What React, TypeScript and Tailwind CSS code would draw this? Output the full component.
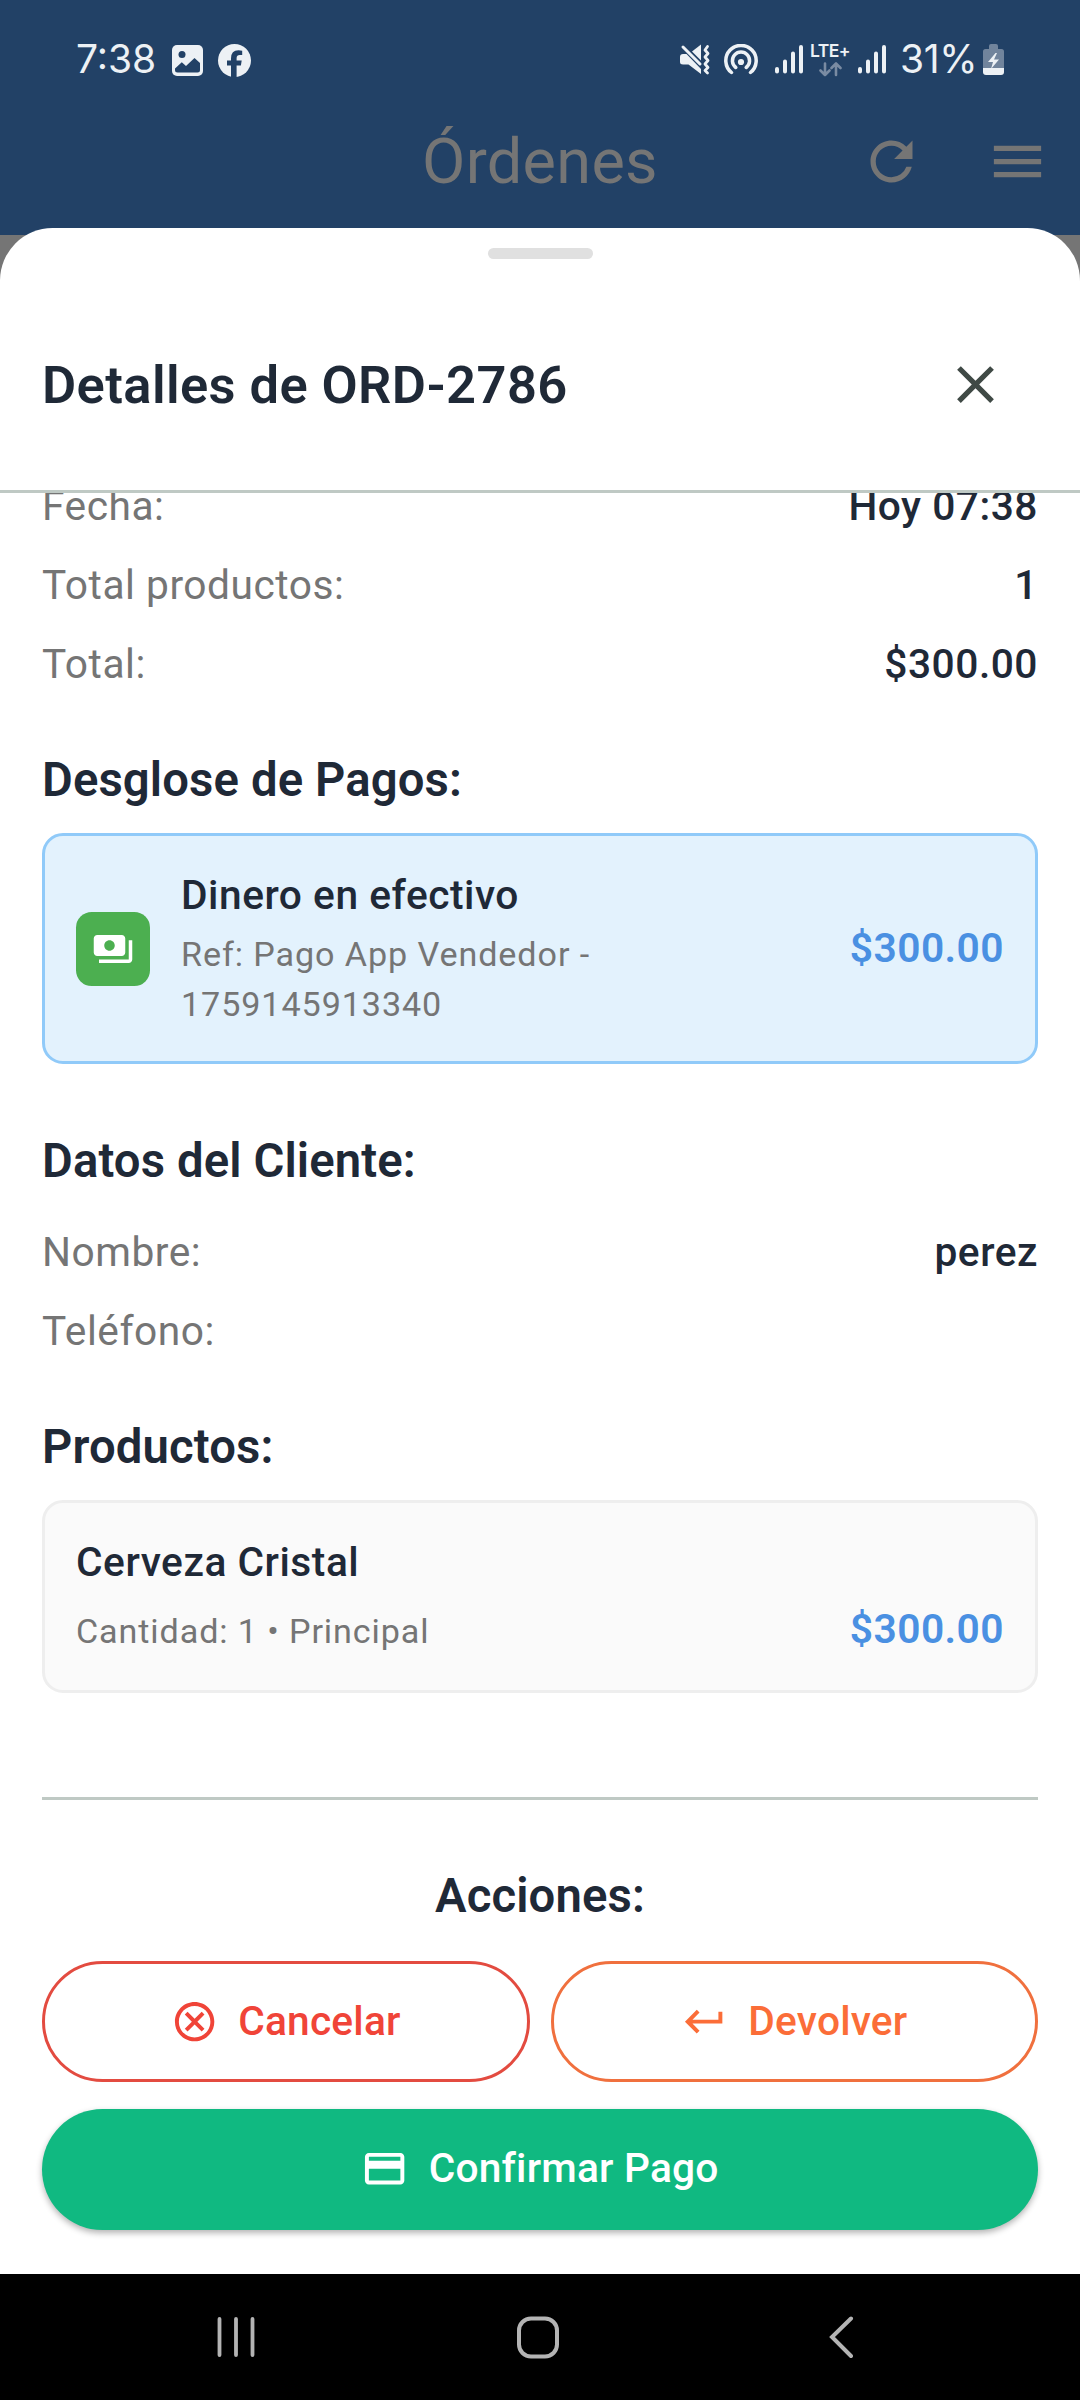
import type { ReactNode } from "react";
import {
  MdClose,
  MdKeyboardReturn,
  MdMenu,
  MdOutlineCancel,
  MdPayments,
  MdRefresh,
} from "react-icons/md";

function SignalBars() {
  return (
    <svg className="h-[30px] w-7 shrink-0" viewBox="0 0 28 30" stroke="#edf1f5" strokeWidth="4" strokeLinecap="round">
      <path d="M2 25v2.500M10 17.500v10M18 9.500v18M26 3v24.500" />
    </svg>
  );
}

function StatusBar() {
  return (
    <div className="flex h-[87px] items-start pt-[44px] pr-[76px] pl-[76px] text-[#edf1f5]">
      <span className="w-[96px] font-[Inter] text-[39px] leading-[30px]">7:38</span>
      <svg className="mt-[1px] h-[31px] w-[31px] shrink-0" viewBox="0 0 31 31">
        <rect width="31" height="31" rx="5" fill="#edf1f5" />
        <circle cx="10" cy="9.500" r="3.500" fill="#224166" />
        <path
          d="M3 23.500L9.800 17.300L14 21L22.500 13L28 18V25Q28 27.500 25.500 27.500H5.500Q3 27.500 3 25Z"
          fill="#224166"
        />
      </svg>
      <svg className="ml-[15px] h-[33px] w-[33px] shrink-0" viewBox="0 0 33 33">
        <circle cx="16.500" cy="16.500" r="16.500" fill="#edf1f5" />
        <path
          d="M13 34V21.500H9V16.500H13V14.500Q13 6.300 20.500 6.300Q22.500 6.300 24.200 6.800V11H21.800Q18.600 11 18.600 14V16.500H23.700L22.900 21.500H18.600V34Z"
          fill="#224166"
        />
      </svg>
      <div className="flex-1" />
      <svg className="h-[31px] w-[30px] shrink-0" viewBox="0 0 30 31" fill="none">
        <path d="M0 13Q0 10 3 10H6.500L21 25V30L8.500 20.500H3Q0 20.500 0 18Z" fill="#edf1f5" />
        <path d="M12 7.500L21 0.500V16.500Z" fill="#edf1f5" />
        <path d="M3 3L20 20" stroke="#edf1f5" strokeWidth="3" strokeLinecap="round" />
        <path
          d="M27.500 2.500L25 6L28 9.500L25 13L28 16.500L25 20L28 23.500L25 26.500L27.500 29"
          stroke="#edf1f5"
          strokeWidth="2.800"
          strokeLinejoin="round"
          strokeLinecap="round"
        />
      </svg>
      <svg
        className="ml-[14px] h-[31px] w-[34px] shrink-0"
        viewBox="0 0 34 31"
        fill="none"
        stroke="#edf1f5"
        strokeWidth="3.500"
        strokeLinecap="round"
      >
        <path d="M7.500 28.500A15.200 15.200 0 1 1 26.500 28.500" />
        <path d="M11.800 23.500A8.600 8.600 0 1 1 22.200 23.500" />
        <circle cx="17" cy="18" r="3.100" fill="#edf1f5" stroke="none" />
      </svg>
      <div className="ml-[17px]">
        <SignalBars />
      </div>
      <div className="ml-[8px] flex w-[38px] flex-col items-center">
        <span className="font-[Inter] text-[17.5px] leading-[13px] font-semibold tracking-[-0.6px]">LTE+</span>
        <svg
          className="mt-[5px] h-[15px] w-[23px]"
          viewBox="0 0 23 15"
          fill="none"
          stroke="#7a8ba2"
          strokeWidth="2.600"
          strokeLinecap="round"
          strokeLinejoin="round"
        >
          <path d="M6 1.500V13M1.500 8.500L6 13L10.500 8.500M17 13V1.500M12.500 6L17 1.500L21.500 6" />
        </svg>
      </div>
      <div className="ml-[9px]">
        <SignalBars />
      </div>
      <span className="ml-[14px] w-[83px] font-[Inter] text-[39px] leading-[30px] tracking-[-0.3px] whitespace-nowrap">
        31%
      </span>
      <svg className="h-[31px] w-[21px] shrink-0" viewBox="0 0 21 31">
        <path d="M6 5V2Q6 0 8 0H13Q15 0 15 2V5H18.500Q21 5 21 7.500V24H0V7.500Q0 5 2.500 5Z" fill="#71849c" />
        <path d="M0 24H21V28Q21 31 18 31H3Q0 31 0 28Z" fill="#edf1f5" />
        <path d="M12.500 9L5 18H10L8 25L16 15.500H11L14 9Z" fill="#edf1f5" />
      </svg>
    </div>
  );
}

function AppBar() {
  return (
    <div className="grid h-[148px] grid-cols-[1fr_auto_1fr] items-start text-[#757575]">
      <span />
      <h1 className="pt-[38px] text-[63px] leading-[74px] font-normal tracking-[0.3px]">Órdenes</h1>
      <div className="flex justify-end gap-[63px] pt-[43px] pr-[31.5px]">
        <MdRefresh className="size-[63px]" />
        <MdMenu className="size-[63px]" />
      </div>
    </div>
  );
}

function SectionTitle({ className, children }: { className: string; children: ReactNode }) {
  return (
    <h3 className={`text-[47.25px] leading-[60px] font-semibold tracking-[0.12px] ${className}`}>{children}</h3>
  );
}

function Row({ label, value }: { label: string; value?: string }) {
  return (
    <div className="flex h-[78.75px] items-center justify-between text-[40.7px] leading-[60px] tracking-[0.52px]">
      <span className="text-[#757575]">{label}</span>
      <span className="font-medium">{value}</span>
    </div>
  );
}

function CreditCardIcon() {
  return (
    <svg className="size-[47.25px]" viewBox="0 0 24 24" fill="currentColor">
      <path d="M20 4H4c-1.110 0-1.990.89-1.990 2L2 18c0 1.110.89 2 2 2h16c1.110 0 2-.89 2-2V6c0-1.110-.89-2-2-2zm0 14H4v-6h16v6zm0-10H4V6h16v2z" />
    </svg>
  );
}

export default function App() {
  return (
    <div className="flex h-[2400px] w-[1080px] flex-col overflow-hidden bg-[#757575] font-[Roboto,sans-serif] text-[#1f2937]">
      <header className="h-[235px] shrink-0 bg-[#224166]">
        <StatusBar />
        <AppBar />
      </header>

      <section className="relative -mt-[7.5px] flex min-h-0 flex-1 flex-col rounded-t-[52.5px] bg-white">
        <div className="mt-[20.5px] h-[10.5px] w-[105px] shrink-0 self-center rounded-full bg-[#e0e0e0]" />
        <div className="flex h-[234.5px] shrink-0 items-center justify-between border-b-3 border-[#bfc9c4] pr-[73.5px] pl-[42px]">
          <h2 className="mt-[21px] text-[52.5px] leading-[60px] font-semibold tracking-[0.4px]">
            Detalles de ORD-2786
          </h2>
          <MdClose className="mt-[20px] size-[63px] text-[#3f4945]" />
        </div>

        <div className="min-h-0 flex-1 overflow-hidden px-[42px]">
          <div className="-mt-[26px]">
            <Row label="Fecha:" value="Hoy 07:38" />
            <Row label="Total productos:" value="1" />
            <Row label="Total:" value="$300.00" />
          </div>

          <SectionTitle className="mt-[47px]">Desglose de Pagos:</SectionTitle>
          <div className="mt-[23px] flex h-[231px] items-center rounded-[21px] border-3 border-[#90caf9] bg-[#e3f2fd] px-[31px]">
            <div className="flex size-[73.5px] items-center justify-center rounded-[15.75px] bg-[#4caf50] text-white">
              <MdPayments className="size-[42px]" />
            </div>
            <div className="ml-[31.5px] flex-1">
              <p className="text-[40.7px] leading-[60px] font-medium tracking-[0.52px]">Dinero en efectivo</p>
              <p className="mt-[5px] w-[440px] text-[34.125px] leading-[49.8px] tracking-[0.92px] text-[#757575]">
                Ref: Pago App Vendedor - 1759145913340
              </p>
              <div className="h-[2px]" />
            </div>
            <span className="text-[40.7px] font-semibold tracking-[0.45px] text-[#4a90e2]">$300.00</span>
          </div>

          <SectionTitle className="mt-[66.7px]">Datos del Cliente:</SectionTitle>
          <div className="mt-[21.5px]">
            <Row label="Nombre:" value="perez" />
            <Row label="Teléfono:" />
          </div>

          <SectionTitle className="mt-[46.8px]">Productos:</SectionTitle>
          <div className="mt-[23.3px] h-[193.4px] rounded-[21px] border-3 border-[#eeeeee] bg-[#fafafa] px-[31px] pt-[28.5px]">
            <p className="text-[40.7px] leading-[60px] font-medium tracking-[0.52px]">Cerveza Cristal</p>
            <div className="mt-[7.5px] flex items-baseline justify-between leading-[60px]">
              <span className="text-[34.125px] tracking-[0.9px] text-[#757575]">Cantidad: 1 • Principal</span>
              <span className="text-[40.7px] font-semibold tracking-[0.45px] text-[#4a90e2]">$300.00</span>
            </div>
          </div>

          <div className="mt-[104px] h-[3px] bg-[#bfc9c4]" />

          <SectionTitle className="mt-[65.8px] text-center">Acciones:</SectionTitle>
          <div className="mt-[35px] grid grid-cols-2 gap-[21px] text-[40.7px] font-medium">
            <button className="flex h-[121px] items-center justify-center gap-[20px] rounded-full border-3 border-[#e34b40] tracking-[0.2px] text-[#f04438]">
              <MdOutlineCancel className="size-[47.25px]" />
              <span>Cancelar</span>
            </button>
            <button className="flex h-[121px] items-center justify-center gap-[20px] rounded-full border-3 border-[#f0703e] tracking-[0.2px] text-[#fb6d38]">
              <MdKeyboardReturn className="size-[47.25px]" />
              <span>Devolver</span>
            </button>
          </div>
          <button className="mt-[26.3px] flex h-[121px] w-full items-center justify-center gap-[20px] rounded-full bg-[#10b981] text-[40.7px] font-medium tracking-[0.2px] text-white shadow-[0_3px_6px_rgba(0,0,0,0.3)]">
            <CreditCardIcon />
            <span>Confirmar Pago</span>
          </button>
        </div>
      </section>

      <nav className="flex h-[126px] shrink-0 items-start bg-black pt-[42px] pl-[216px]">
        <svg className="h-[43px] w-10" viewBox="0 0 40 43" stroke="#b4b4b4" strokeWidth="3.800" strokeLinecap="round">
          <path d="M3.500 3V39M20 3V39M36.500 3V39" />
        </svg>
        <svg className="ml-[260px] h-[43px] w-11" viewBox="0 0 44 43" fill="none" stroke="#b4b4b4" strokeWidth="4">
          <rect x="3" y="2.500" width="38" height="38" rx="12" />
        </svg>
        <svg
          className="ml-[267px] h-[43px] w-[27px]"
          viewBox="0 0 27 43"
          fill="none"
          stroke="#b4b4b4"
          strokeWidth="4"
          strokeLinecap="round"
          strokeLinejoin="miter"
        >
          <path d="M24 2.500L5 21L24 40" />
        </svg>
      </nav>
    </div>
  );
}
